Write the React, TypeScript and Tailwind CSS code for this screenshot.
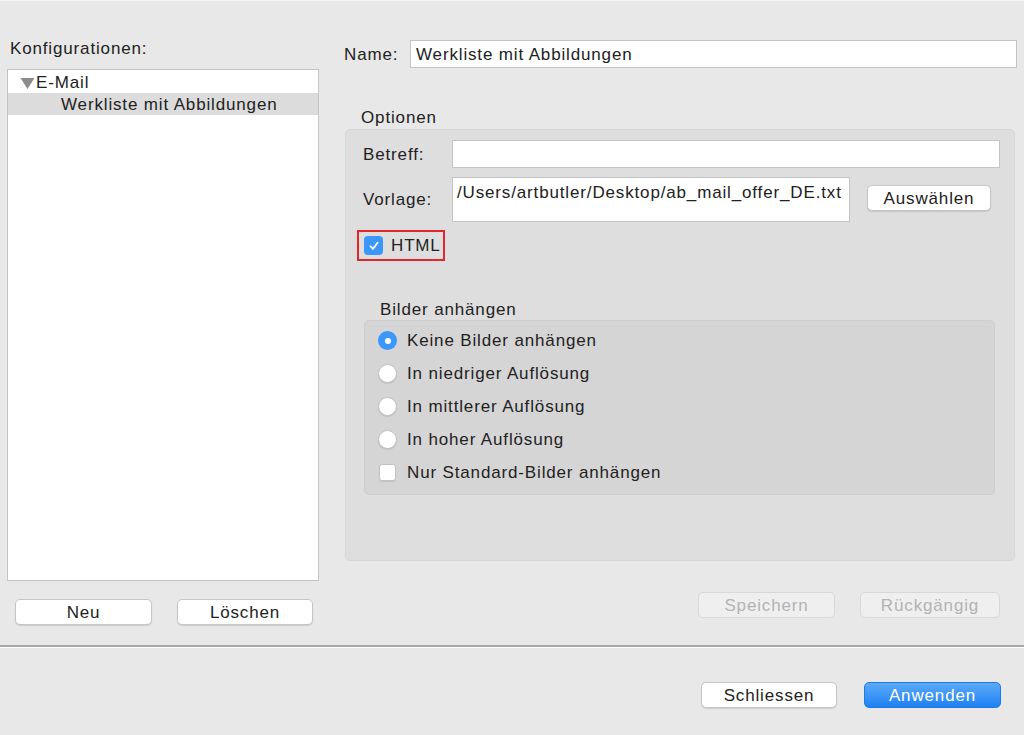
import type { ReactNode } from 'react';

const font = "font-['Liberation_Sans',Arial,sans-serif] text-[17px] tracking-[0.85px] text-[#222]";

function MacButton({
  children,
  width,
  disabled,
  primary,
  className = '',
}: {
  children: ReactNode;
  width: string;
  disabled?: boolean;
  primary?: boolean;
  className?: string;
}) {
  const tone = primary
    ? 'bg-gradient-to-b from-[#5aaaf8] to-[#1d80f3] border-[#1f7ae6] text-white'
    : disabled
      ? 'bg-[#efefef] border-[#d8d8d8] text-[#b3b3b3] shadow-none'
      : 'bg-white border-[#c6c6c6] text-[#222] shadow-[0_1px_1px_rgba(0,0,0,0.12)]';
  return (
    <button
      type="button"
      className={`${width} ${tone} ${className} flex h-[26px] items-center justify-center rounded-[5px] border pt-[1px] leading-none`}
    >
      {children}
    </button>
  );
}

function Radio({ checked }: { checked?: boolean }) {
  if (checked) {
    return (
      <span className="flex h-[19px] w-[19px] items-center justify-center rounded-full bg-[#3b97f9]">
        <span className="h-[6px] w-[6px] rounded-full bg-white" />
      </span>
    );
  }
  return <span className="h-[19px] w-[19px] rounded-full border border-[#c2c2c2] bg-white shadow-[0_1px_1px_rgba(0,0,0,0.1)]" />;
}

const options = [
  { label: 'Keine Bilder anhängen', checked: true },
  { label: 'In niedriger Auflösung' },
  { label: 'In mittlerer Auflösung' },
  { label: 'In hoher Auflösung' },
];

export default function App() {
  return (
    <div className={`${font} relative h-[735px] w-[1024px] overflow-hidden bg-[#e8e8e8]`}>
      <div className="h-px bg-[#f4f4f4]" />
      <div className="flex h-[644px]">
        {/* left: configuration list */}
        <div className="ml-[7px] w-[312px] pt-[38px]">
          <p className="pl-[3px] leading-[20px]">Konfigurationen:</p>
          <div className="mt-[10px] h-[512px] border border-[#c4c4c4] bg-white pt-[1px]">
            <div className="flex h-[22px] items-center pl-[12px] pt-[1px]">
              <svg width="15" height="12" viewBox="0 0 15 12" className="mr-[1px]">
                <path d="M0.5 1 L14.5 1 L7.5 12 Z" fill="#8c8c8c" />
              </svg>
              <span>E-Mail</span>
            </div>
            <div className="flex h-[22px] items-center bg-[#dcdcdc] pl-[53px] pt-[1px]">Werkliste mit Abbildungen</div>
          </div>
          <div className="mt-[18px] flex">
            <MacButton width="w-[137px]" className="ml-[8px]">Neu</MacButton>
            <MacButton width="w-[136px]" className="ml-[25px]">Löschen</MacButton>
          </div>
        </div>

        {/* right: settings */}
        <div className="ml-[25px] w-[673px] pt-[39px]">
          <div className="flex h-[28px] items-center">
            <span className="w-[66px] pt-[1px]">Name:</span>
            <div className="flex h-[28px] flex-1 items-center border border-[#c4c4c4] bg-white pl-[5px] pt-[1px]">Werkliste mit Abbildungen</div>
          </div>
          <p className="mt-[40px] pl-[17px] leading-[20px]">Optionen</p>
          <div className="ml-[1px] mt-[1px] h-[432px] w-[670px] rounded-[5px] border border-[#d6d6d6] bg-[#dedede] pt-[10px]">
            <div className="ml-[17px] flex h-[28px] items-center">
              <span className="w-[89px] pt-[1px]">Betreff:</span>
              <div className="h-[28px] w-[548px] border border-[#c4c4c4] bg-white" />
            </div>
            <div className="ml-[17px] mt-[9px] flex items-start">
              <span className="flex h-[45px] w-[89px] items-center pt-[1px]">Vorlage:</span>
              <div className="h-[45px] w-[398px] border border-[#c4c4c4] bg-white pl-[4px] pt-[5px] leading-[20px]">
                /Users/artbutler/Desktop/ab_mail_offer_DE.txt
              </div>
              <MacButton width="w-[124px]" className="ml-[17px] mt-[8px]">Auswählen</MacButton>
            </div>
            <div className="ml-[11px] mt-[8px] flex h-[31px] w-[88px] items-center border-2 border-[#e3262b]">
              <span className="ml-[5px] flex h-[19px] w-[19px] items-center justify-center rounded-[4px] bg-[#3b97f9]">
                <svg width="12" height="12" viewBox="0 0 12 12">
                  <path d="M2.5 6.3 L5 8.8 L9.6 2.8" fill="none" stroke="white" strokeWidth="1.8" strokeLinecap="round" strokeLinejoin="round" />
                </svg>
              </span>
              <span className="ml-[8px] pt-[1px]">HTML</span>
            </div>
            <p className="ml-[34px] mt-[39px] leading-[20px]">Bilder anhängen</p>
            <div className="ml-[18px] mt-[0px] h-[175px] w-[631px] rounded-[5px] border border-[#cdcdcd] bg-[#d5d5d5] pt-[3px]">
              {options.map((o) => (
                <div key={o.label} className="flex h-[33px] items-center pl-[13px]">
                  <Radio checked={o.checked} />
                  <span className="ml-[10px] pt-[1px]">{o.label}</span>
                </div>
              ))}
              <div className="flex h-[33px] items-center pl-[14px]">
                <span className="h-[17px] w-[17px] rounded-[3px] border border-[#c2c2c2] bg-white shadow-[0_1px_1px_rgba(0,0,0,0.1)]" />
                <span className="ml-[11px] pt-[1px]">Nur Standard-Bilder anhängen</span>
              </div>
            </div>
          </div>
          <div className="mt-[31px] flex justify-end gap-[25px] pr-[17px]">
            <MacButton width="w-[137px]" disabled>Speichern</MacButton>
            <MacButton width="w-[140px]" disabled>Rückgängig</MacButton>
          </div>
        </div>
      </div>

      <div className="h-[2px] bg-[#a9a9a9]" />
      <div className="h-px bg-white" />

      <div className="flex justify-end gap-[27px] pr-[23px] pt-[34px]">
        <MacButton width="w-[136px]">Schliessen</MacButton>
        <MacButton width="w-[137px]" primary>Anwenden</MacButton>
      </div>
    </div>
  );
}
